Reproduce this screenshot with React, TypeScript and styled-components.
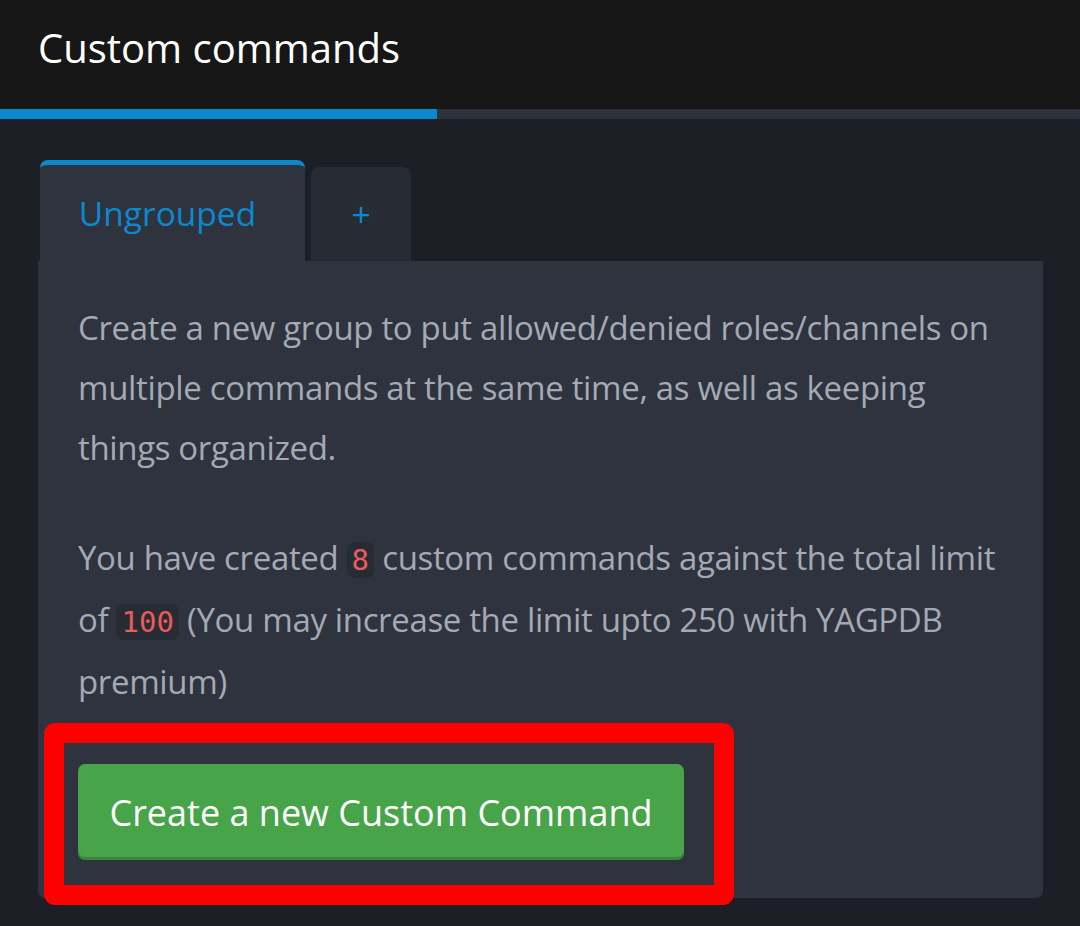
import React from "react";
import styled, { createGlobalStyle } from "styled-components";

const GlobalStyle = createGlobalStyle`
  html, body {
    margin: 0;
    padding: 0;
    background: #1d1f26;
    font-family: "Open Sans", "Noto Sans", sans-serif;
  }
  * { box-sizing: border-box; }
`;

const Page = styled.div`
  width: 1080px;
  min-height: 926px;
  background: #1d1f26;
  overflow: hidden;
`;

const Header = styled.header`
  height: 109px;
  background: #171717;
  padding: 20px 0 0 38px;
`;

const Title = styled.h1`
  margin: 0;
  font-size: 40px;
  font-weight: 400;
  color: #ffffff;
  line-height: normal;
`;

const Track = styled.div`
  height: 10px;
  background: #2d313a;
  display: flex;
`;

const Fill = styled.div`
  height: 100%;
  background: #0a89cf;
`;

const Content = styled.main`
  padding: 41px 37px 0 38px;
`;

const Tabs = styled.div`
  display: flex;
  align-items: flex-end;
  gap: 6px;
  padding-left: 2px;
`;

const Tab = styled.div<{ $active?: boolean }>`
  display: flex;
  align-items: center;
  justify-content: center;
  width: ${(p) => (p.$active ? "265px" : "100px")};
  height: ${(p) => (p.$active ? "101px" : "94px")};
  padding-right: ${(p) => (p.$active ? "10px" : "0")};
  background: ${(p) => (p.$active ? "#2e333d" : "#272b33")};
  border-top: ${(p) => (p.$active ? "5px solid #0a89cf" : "none")};
  border-radius: 8px 8px 0 0;
  color: #0a89cf;
  font-size: 33.5px;
  line-height: normal;
`;

const Panel = styled.section`
  background: #2e333d;
  border-radius: 0 0 7px 7px;
  padding: 37px 40px 38px 40px;
`;

const Paragraph = styled.p<{ $lh: number; $mb: number }>`
  margin: 0 0 ${(p) => p.$mb}px 0;
  font-family: "Open Sans", "Noto Sans", sans-serif;
  font-size: 33px;
  letter-spacing: -0.35px;
  line-height: ${(p) => p.$lh}px;
  color: #a3aab5;
`;

const Code = styled.code`
  font-family: "DejaVu Sans Mono", "Liberation Mono", monospace;
  font-size: 29px;
  letter-spacing: 0;
  line-height: 1;
  color: #ea5b5b;
  background: #272b33;
  border-radius: 8px;
  padding: 1px 5px;
`;

const ButtonWrap = styled.div`
  position: relative;
  display: inline-block;
  vertical-align: top;
`;

const Highlight = styled.div`
  position: absolute;
  left: -34px;
  right: -50px;
  top: -41px;
  bottom: -45px;
  border: 20px solid #ff0000;
  border-radius: 11px;
  pointer-events: none;
`;

const Button = styled.button`
  display: block;
  width: 606px;
  height: 96px;
  padding: 0;
  border: none;
  border-radius: 7px;
  background: #47a449;
  box-shadow: inset 0 -3px 0 rgba(0, 0, 0, 0.18);
  color: #ffffff;
  font-family: "Open Sans", "Noto Sans", sans-serif;
  font-size: 36px;
  line-height: normal;
  cursor: pointer;
`;

export default function App() {
  return (
    <Page>
      <GlobalStyle />
      <Header>
        <Title>Custom commands</Title>
      </Header>
      <Track>
        <Fill style={{ width: "437px" }} />
      </Track>
      <Content>
        <Tabs>
          <Tab $active>Ungrouped</Tab>
          <Tab>+</Tab>
        </Tabs>
        <Panel>
          <Paragraph $lh={60} $mb={49}>
            Create a new group to put allowed/denied roles/channels on multiple
            commands at the same time, as well as keeping things organized.
          </Paragraph>
          <Paragraph $lh={62} $mb={51}>
            You have created <Code>8</Code> custom commands against the total
            limit of <Code>100</Code> (You may increase the limit upto 250 with
            YAGPDB premium)
          </Paragraph>
          <ButtonWrap>
            <Button>Create a new Custom Command</Button>
            <Highlight />
          </ButtonWrap>
        </Panel>
      </Content>
    </Page>
  );
}
